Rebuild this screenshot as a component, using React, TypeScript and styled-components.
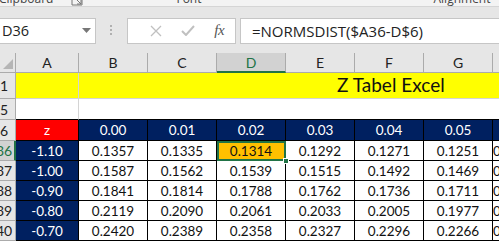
import React from "react";
import styled, { createGlobalStyle } from "styled-components";

const Global = createGlobalStyle`
  html, body { margin: 0; padding: 0; background: #ffffff; overflow: hidden; }
  body { font-family: "Lato", "Liberation Sans", sans-serif; }
  * { box-sizing: border-box; }
`;

const Page = styled.div`
  width: 499px;
  height: 241px;
  display: flex;
  flex-direction: column;
  overflow: hidden;
  background: #e6e6e6;
`;

const Ribbon = styled.div`
  height: 7px;
  background: #f3f3f3;
  border-bottom: 1px solid #d5d5d5;
  display: flex;
  align-items: flex-start;
  overflow: hidden;
  font-family: "Open Sans", "Noto Sans", sans-serif;
  font-size: 12px;
  line-height: 12px;
  color: #444;
  white-space: nowrap;
`;

const GroupLabel = styled.span<{ $left: number }>`
  margin-left: ${(p) => p.$left}px;
  margin-top: -7px;
`;

const Launcher = styled.svg`
  margin-left: 18px;
  margin-top: -6px;
  flex: none;
`;

const FormulaArea = styled.div`
  height: 47px;
  padding: 11px 0 9px 0;
  display: flex;
  align-items: stretch;
`;

const Box = styled.div`
  background: #ffffff;
  border: 1px solid #c6c6c6;
  height: 26px;
  display: flex;
  align-items: center;
`;

const NameBox = styled(Box)`
  width: 96px;
  border-left: none;
  padding: 0 4px 0 2px;
  justify-content: space-between;
  font-family: "Open Sans", "Noto Sans", sans-serif;
  font-size: 14.5px;
  color: #222;
`;

const Grip = styled.div`
  width: 31px;
  display: flex;
  align-items: center;
  justify-content: center;
`;

const ButtonsBox = styled(Box)`
  width: 109px;
  padding: 0 0 0 12px;
`;

const FxButton = styled.span`
  width: 36px;
  display: flex;
  align-items: center;
  justify-content: center;
  font-family: "Liberation Serif", serif;
  font-style: italic;
  font-size: 15px;
  color: #555;
  letter-spacing: -0.5px;
`;

const IconCell = styled.span`
  width: 36px;
  display: flex;
  align-items: center;
  justify-content: center;
`;

const FormulaInput = styled(Box)`
  flex: 1;
  margin-left: 4px;
  border-right: none;
  padding-left: 11px;
  font-family: "Open Sans", "Noto Sans", sans-serif;
  font-size: 15px;
  color: #222;
  white-space: nowrap;
`;

const Sheet = styled.div`
  flex: 1;
  display: grid;
  grid-template-columns: 16px 63px repeat(6, 69px) 1fr;
  grid-template-rows: 20px 26px 21px 21px repeat(5, 20px);
  background: #ffffff;
  font-family: "Lato", "Liberation Sans", sans-serif;
`;

const ColHead = styled.div<{ $sel?: boolean }>`
  background: ${(p) => (p.$sel ? "#d2d2d2" : "#e6e6e6")};
  border-right: 1px solid #ababab;
  border-bottom: ${(p) => (p.$sel ? "2px solid #217346" : "1px solid #ababab")};
  display: flex;
  align-items: center;
  justify-content: center;
  font-size: 14px;
  color: ${(p) => (p.$sel ? "#217346" : "#222")};
  padding-top: ${(p) => (p.$sel ? "1px" : "0")};
`;

const Corner = styled.div`
  background: #e6e6e6;
  border-right: 1px solid #ababab;
  border-bottom: 1px solid #ababab;
  display: flex;
  align-items: flex-end;
  justify-content: flex-end;
  padding: 0 2px 3px 0;
`;

const RowHead = styled.div<{ $sel?: boolean }>`
  background: ${(p) => (p.$sel ? "#d2d2d2" : "#e6e6e6")};
  border-right: ${(p) => (p.$sel ? "2px solid #217346" : "1px solid #ababab")};
  border-bottom: 1px solid #ababab;
  display: flex;
  align-items: center;
  justify-content: flex-start;
  overflow: hidden;
  font-size: 14px;
  color: ${(p) => (p.$sel ? "#217346" : "#222")};
  white-space: nowrap;
`;

const RowNum = styled.span`
  flex: none;
  width: 30px;
  margin-left: -11px;
  text-align: center;
`;

const Cell = styled.div<{ $fill?: string; $line?: string }>`
  position: relative;
  background: ${(p) => p.$fill || "#ffffff"};
  border-right: 1px solid ${(p) => p.$line || "#d4d4d4"};
  border-bottom: 1px solid ${(p) => p.$line || "#d4d4d4"};
  display: flex;
  align-items: center;
  justify-content: center;
  font-size: 13.5px;
  color: #111;
  white-space: nowrap;
`;

const EdgeCell = styled(Cell)`
  border-bottom-color: #000000;
`;

const TitleCell = styled.div`
  grid-column: 3 / -1;
  background: #ffff00;
  border-bottom: 1px solid #d4d4d4;
  display: flex;
  align-items: flex-end;
  padding: 0 0 2px 258px;
  font-size: 19px;
  color: #111;
  white-space: nowrap;
`;

const WideBlank = styled.div`
  grid-column: 3 / -1;
  background: #ffffff;
  border-bottom: 1px solid #000000;
`;

const HeadValue = styled(Cell)`
  background: #002060;
  color: #ffffff;
  border-color: #000000;
`;

const ZCell = styled(Cell)`
  background: #ff0000;
  color: #ffffff;
  border-color: #000000;
`;

const Selected = styled(Cell)`
  background: #ffc000;
  outline: 2px solid #217346;
  outline-offset: -2px;
  border-color: #000000;
`;

const FillHandle = styled.span`
  position: absolute;
  right: -4px;
  bottom: -4px;
  width: 6px;
  height: 6px;
  background: #217346;
  border: 1px solid #ffffff;
  z-index: 2;
`;

const cols = ["A", "B", "C", "D", "E", "F", "G", "H"];
const heads = ["0.00", "0.01", "0.02", "0.03", "0.04", "0.05", "0.06"];
const rows: { n: string; z: string; v: string[] }[] = [
  { n: "36", z: "-1.10", v: ["0.1357", "0.1335", "0.1314", "0.1292", "0.1271", "0.1251", "0.1230"] },
  { n: "37", z: "-1.00", v: ["0.1587", "0.1562", "0.1539", "0.1515", "0.1492", "0.1469", "0.1446"] },
  { n: "38", z: "-0.90", v: ["0.1841", "0.1814", "0.1788", "0.1762", "0.1736", "0.1711", "0.1685"] },
  { n: "39", z: "-0.80", v: ["0.2119", "0.2090", "0.2061", "0.2033", "0.2005", "0.1977", "0.1949"] },
  { n: "40", z: "-0.70", v: ["0.2420", "0.2389", "0.2358", "0.2327", "0.2296", "0.2266", "0.2236"] },
];

export default function App() {
  return (
    <Page>
      <Global />
      <Ribbon>
        <GroupLabel $left={-1}>Clipboard</GroupLabel>
        <Launcher width="12" height="12" viewBox="0 0 12 12">
          <path d="M1 1v10h10V1" fill="none" stroke="#777" strokeWidth="1" />
          <path d="M5 5l5 5M10 6v4H6" fill="none" stroke="#777" strokeWidth="1" />
        </Launcher>
        <GroupLabel $left={93}>Font</GroupLabel>
        <GroupLabel $left={232}>Alignment</GroupLabel>
      </Ribbon>
      <FormulaArea>
        <NameBox>
          <span>D36</span>
          <svg width="9" height="5" viewBox="0 0 9 5">
            <path d="M0 0h9L4.5 5z" fill="#777" />
          </svg>
        </NameBox>
        <Grip>
          <svg width="3" height="11" viewBox="0 0 3 11">
            <rect x="0" y="0" width="2" height="2" fill="#b0b0b0" />
            <rect x="0" y="4" width="2" height="2" fill="#b0b0b0" />
            <rect x="0" y="8" width="2" height="2" fill="#b0b0b0" />
          </svg>
        </Grip>
        <ButtonsBox>
          <IconCell>
            <svg width="12" height="12" viewBox="0 0 12 12">
              <path d="M1 1l10 10M11 1L1 11" stroke="#c0c0c0" strokeWidth="1.3" />
            </svg>
          </IconCell>
          <IconCell>
            <svg width="14" height="11" viewBox="0 0 14 11">
              <path d="M1 6l4 4 8-9" fill="none" stroke="#c0c0c0" strokeWidth="2" />
            </svg>
          </IconCell>
          <FxButton>fx</FxButton>
        </ButtonsBox>
        <FormulaInput>=NORMSDIST($A36-D$6)</FormulaInput>
      </FormulaArea>
      <Sheet>
        <Corner>
          <svg width="10" height="10" viewBox="0 0 10 10">
            <path d="M10 0v10H0z" fill="#b5b5b5" />
          </svg>
        </Corner>
        {cols.map((c) => (
          <ColHead key={c} $sel={c === "D"}>
            {c}
          </ColHead>
        ))}

        <RowHead>
          <RowNum>1</RowNum>
        </RowHead>
        <Cell $fill="#ffff00" />
        <TitleCell>Z Tabel Excel</TitleCell>

        <RowHead>
          <RowNum>5</RowNum>
        </RowHead>
        <EdgeCell />
        <WideBlank />

        <RowHead>
          <RowNum>6</RowNum>
        </RowHead>
        <ZCell>z</ZCell>
        {heads.map((h) => (
          <HeadValue key={h}>{h}</HeadValue>
        ))}

        {rows.map((r) => (
          <React.Fragment key={r.n}>
            <RowHead $sel={r.n === "36"}>
              <RowNum>{r.n}</RowNum>
            </RowHead>
            <HeadValue>{r.z}</HeadValue>
            {r.v.map((v, i) =>
              r.n === "36" && i === 2 ? (
                <Selected key={i}>
                  {v}
                  <FillHandle />
                </Selected>
              ) : (
                <Cell key={i} $line="#000000">
                  {v}
                </Cell>
              )
            )}
          </React.Fragment>
        ))}
      </Sheet>
    </Page>
  );
}
